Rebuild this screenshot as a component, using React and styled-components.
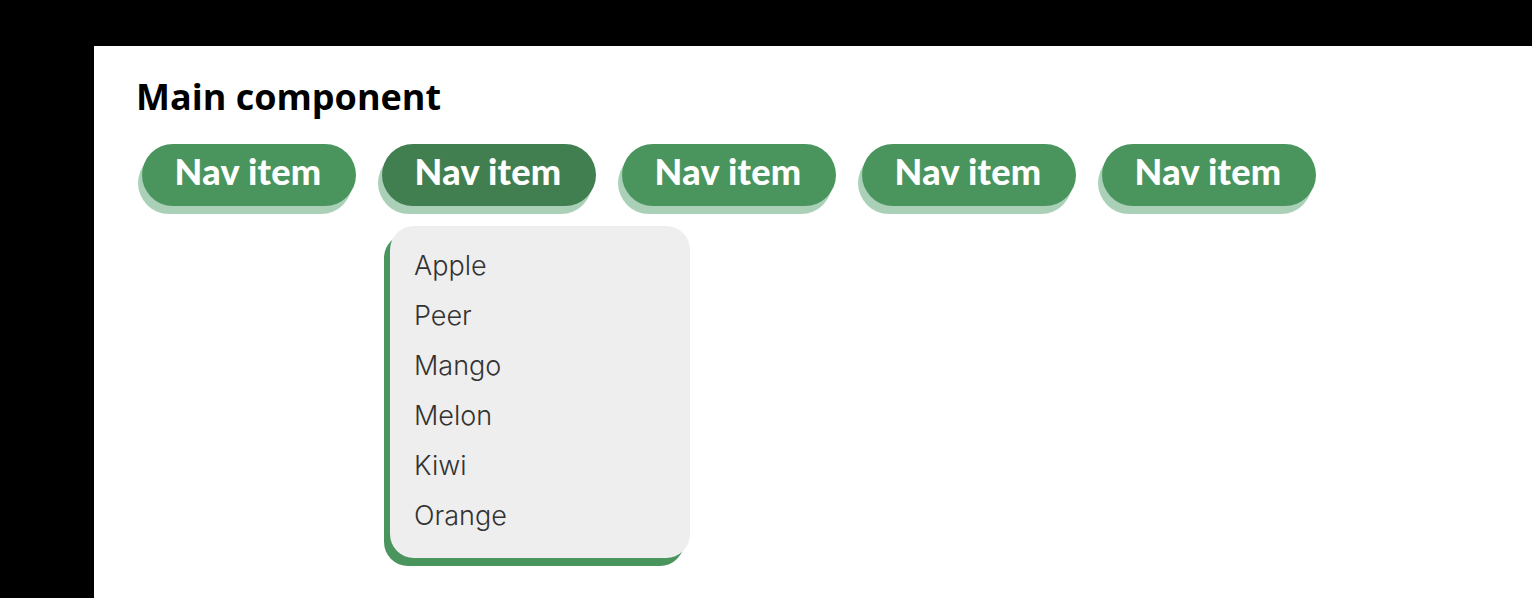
import React, { useState } from "react";
import styled, { createGlobalStyle } from "styled-components";

const Global = createGlobalStyle`
  html, body { margin: 0; padding: 0; background: #000; }
  body { font-family: "Open Sans", sans-serif; }
`;

const Panel = styled.div`
  margin: 46px 0 0 94px;
  background: #fff;
  min-height: 552px;
  padding: 26px 40px 0 40px;
  box-sizing: border-box;
`;

const Heading = styled.h1`
  margin: 0 0 23px 2px;
  font-family: "Open Sans", sans-serif;
  font-weight: 700;
  font-size: 36px;
  line-height: 49px;
  color: #000;
`;

const Nav = styled.nav`
  display: flex;
  gap: 26px;
  padding-left: 8px;
`;

const ItemWrap = styled.div`
  position: relative;
`;

const NavButton = styled.button`
  width: 214px;
  height: 62px;
  border: none;
  border-radius: 31px;
  background: ${(p) => (p.$active ? "#417f50" : "#4a955e")};
  box-shadow: -4px 8px 0 #aad0b8;
  color: #fff;
  font-family: "Lato", sans-serif;
  font-weight: 900;
  font-size: 36px;
  letter-spacing: 0.3px;
  line-height: 1;
  padding: 0 2px 8px 0;
  cursor: pointer;
`;

const Dropdown = styled.ul`
  position: absolute;
  top: 82px;
  left: 8px;
  width: 300px;
  height: 332px;
  box-sizing: border-box;
  margin: 0;
  padding: 15px 0 0 24px;
  list-style: none;
  background: #eeeeee;
  border-radius: 24px;
  box-shadow: -6px 8px 0 #4a955e;
`;

const Option = styled.li`
  font-family: "Inter", sans-serif;
  font-weight: 300;
  font-size: 27px;
  line-height: 50px;
  color: #333;
`;

const fruits = ["Apple", "Peer", "Mango", "Melon", "Kiwi", "Orange"];

export default function App() {
  const [open] = useState(1);
  return (
    <>
      <Global />
      <Panel>
        <Heading>Main component</Heading>
        <Nav>
          {[0, 1, 2, 3, 4].map((i) => (
            <ItemWrap key={i}>
              <NavButton $active={i === open}>Nav item</NavButton>
              {i === open && (
                <Dropdown>
                  {fruits.map((f) => (
                    <Option key={f}>{f}</Option>
                  ))}
                </Dropdown>
              )}
            </ItemWrap>
          ))}
        </Nav>
      </Panel>
    </>
  );
}
